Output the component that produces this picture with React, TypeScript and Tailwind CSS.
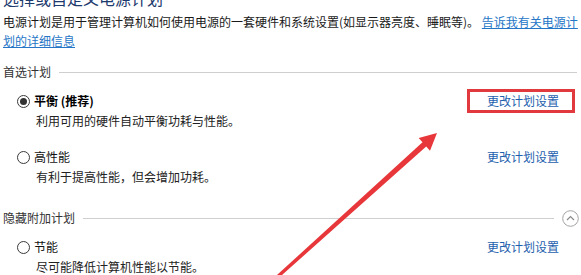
import React from "react";

type Plan = {
  name: string;
  desc: string;
  checked?: boolean;
  bold?: boolean;
  highlight?: boolean;
  gap: string;
};

const Radio = ({ checked }: { checked?: boolean }) => (
  <span className="w-[13px] h-[13px] rounded-full border border-[#3a3a3a] flex items-center justify-center shrink-0">
    {checked && <span className="w-[7px] h-[7px] rounded-full bg-[#333]" />}
  </span>
);

const PlanRow = ({ plan }: { plan: Plan }) => (
  <div className={plan.gap}>
    <div className="flex items-center justify-between h-[24px] pr-[2px]">
      <label className="flex items-center gap-[4px] pl-[14px] leading-[24px]">
        <Radio checked={plan.checked} />
        <span className={plan.bold ? "font-bold text-black" : "text-[#111]"}>{plan.name}</span>
      </label>
      <a
        className={
          "block h-[24px] leading-[18px] pl-[17px] pr-[13px] border-[3px] text-[#1e5fae] " +
          (plan.highlight ? "border-[#e2393e]" : "border-transparent")
        }
      >
        更改计划设置
      </a>
    </div>
    <p className="pl-[33px] leading-[16px] text-[#222]">{plan.desc}</p>
  </div>
);

const Section = ({ title, collapse }: { title: string; collapse?: boolean }) => (
  <div className="flex items-center h-[20px] gap-[8px] text-[#333]">
    <span className="whitespace-nowrap">{title}</span>
    <span className="flex-1 h-px bg-[#cfcfcf]" />
    {collapse && (
      <svg width="17" height="17" viewBox="0 0 17 17" className="shrink-0 -mr-[2px]">
        <circle cx="8.5" cy="8.5" r="7.8" fill="none" stroke="#a3a3a3" strokeWidth="1" />
        <path d="M5 10 L8.5 6.5 L12 10" fill="none" stroke="#8a8a8a" strokeWidth="1.2" />
      </svg>
    )}
  </div>
);

const preferred: Plan[] = [
  { name: "平衡 (推荐)", desc: "利用可用的硬件自动平衡功耗与性能。", checked: true, bold: true, highlight: true, gap: "mt-[7px]" },
  { name: "高性能", desc: "有利于提高性能，但会增加功耗。", gap: "mt-[16px]" },
];

const hidden: Plan[] = [{ name: "节能", desc: "尽可能降低计算机性能以节能。", gap: "mt-[7px]" }];

export default function App() {
  return (
    <div className="relative w-[581px] h-[275px] overflow-hidden bg-white text-[12px] font-['Noto_Sans_CJK_SC','Noto_Sans',sans-serif]">
      <div className="pl-[3px] pr-[4px]">
        <h1 className="-mt-[12px] h-[20px] leading-[20px] text-[16px] text-[#1d3a6e] whitespace-nowrap">
          选择或自定义电源计划
        </h1>
        <p className="mt-[4px] leading-[19px] text-[#1a1a1a] whitespace-nowrap">
          电源计划是用于管理计算机如何使用电源的一套硬件和系统设置(如显示器亮度、睡眠等)。{" "}
          <a className="text-[#2576c6] underline">告诉我有关电源计</a>
          <br />
          <a className="text-[#2576c6] underline">划的详细信息</a>
        </p>

        <div className="mt-[12px]">
          <Section title="首选计划" />
        </div>
        {preferred.map((p) => (
          <PlanRow key={p.name} plan={p} />
        ))}

        <div className="mt-[23px]">
          <Section title="隐藏附加计划" collapse />
        </div>
        {hidden.map((p) => (
          <PlanRow key={p.name} plan={p} />
        ))}
      </div>

      {/* annotation arrow */}
      <svg className="absolute inset-0 pointer-events-none" width="581" height="275" viewBox="0 0 581 275">
        <polygon
          fill="#e8373b"
          points="270.3,281.1 422.5,142.3 418.7,138.0 437,133 430.0,150.7 426.2,146.5 272.7,283.3"
        />
      </svg>
    </div>
  );
}
